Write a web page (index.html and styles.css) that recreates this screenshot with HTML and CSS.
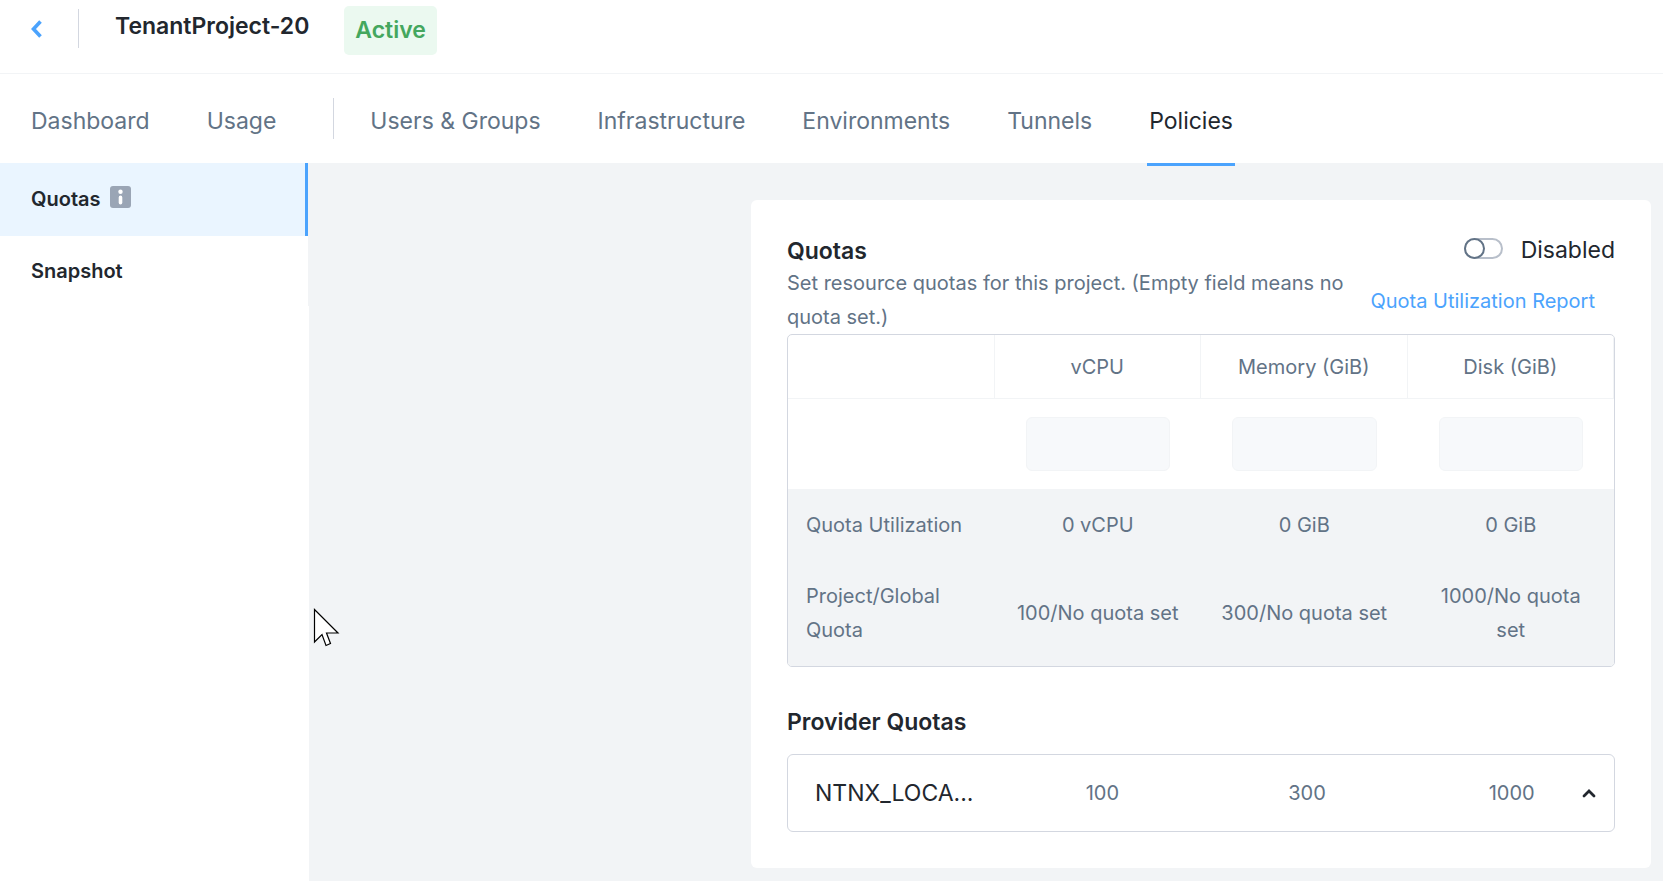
FILE: index.html
```html
<!DOCTYPE html>
<html lang="en">
<head>
<meta charset="utf-8">
<title>TenantProject-20 - Policies</title>
<link rel="stylesheet" href="styles.css">
</head>
<body>
<header class="topbar">
  <button class="back" type="button" aria-label="Back">
    <svg width="12" height="20" viewBox="0 0 12 20"><path d="M9.5 2.500 2.500 10l7 7.500" fill="none" stroke="currentColor" stroke-width="3.600" stroke-linecap="butt"/></svg>
  </button>
  <h1 class="project-name">TenantProject-20</h1>
  <span class="badge">Active</span>
</header>
<nav class="tabs" aria-label="Project">
  <a class="tab" href="#dashboard">Dashboard</a>
  <a class="tab" href="#usage">Usage</a>
  <span class="tab-divider"></span>
  <a class="tab" href="#users">Users &amp; Groups</a>
  <a class="tab" href="#infrastructure">Infrastructure</a>
  <a class="tab" href="#environments">Environments</a>
  <a class="tab" href="#tunnels">Tunnels</a>
  <a class="tab tab-active" href="#policies" aria-current="page">Policies</a>
</nav>
<div class="body">
  <aside class="sidebar">
    <a class="side-item side-active" href="#quotas">Quotas
      <svg class="info" width="21" height="22" viewBox="0 0 21 22"><rect width="21" height="22" rx="3" fill="#9aa5b5"/><circle cx="10.500" cy="5.800" r="2.200" fill="#fff"/><rect x="8.700" y="9.600" width="3.600" height="9" rx="1.800" fill="#fff"/></svg>
    </a>
    <a class="side-item" href="#snapshot">Snapshot</a>
  </aside>
  <main class="content">
    <section class="card">
      <div class="card-head">
        <div class="intro">
          <h2 class="heading">Quotas</h2>
          <p class="description">Set resource quotas for this project. (Empty field means no quota set.)</p>
        </div>
        <div class="actions">
          <label class="switch"><input class="toggle" type="checkbox" role="switch">Disabled</label>
          <a class="report" href="#report">Quota Utilization Report</a>
        </div>
      </div>
      <div class="table-box">
        <table class="quota-table">
          <thead>
            <tr><th></th><th scope="col">vCPU</th><th scope="col">Memory (GiB)</th><th scope="col">Disk (GiB)</th></tr>
          </thead>
          <tbody>
            <tr class="input-row">
              <td></td>
              <td><input class="field" type="text" aria-label="vCPU" disabled></td>
              <td><input class="field" type="text" aria-label="Memory (GiB)" disabled></td>
              <td><input class="field" type="text" aria-label="Disk (GiB)" disabled></td>
            </tr>
            <tr class="summary"><th scope="row">Quota Utilization</th><td>0 vCPU</td><td>0 GiB</td><td>0 GiB</td></tr>
            <tr class="summary"><th scope="row">Project/Global Quota</th><td>100/No quota set</td><td>300/No quota set</td><td>1000/No quota set</td></tr>
          </tbody>
        </table>
      </div>
      <h2 class="heading provider-heading">Provider Quotas</h2>
      <div class="provider">
        <span class="provider-name">NTNX_LOCA...</span>
        <span class="amount">100</span>
        <span class="amount">300</span>
        <span class="amount amount-last">1000</span>
        <button class="expand" type="button" aria-label="Toggle details">
          <svg width="14" height="10" viewBox="0 0 14 10"><path d="M2 8 7 3l5 5" fill="none" stroke="currentColor" stroke-width="2.800" stroke-linecap="round"/></svg>
        </button>
      </div>
    </section>
  </main>
</div>
<svg class="pointer" width="27" height="39" viewBox="0 0 27 39" aria-hidden="true"><path d="M1.500 1.500v32.500l7.500-7.500L13 37.500l4.500-2L13.500 25h11.500z" fill="#fff" stroke="#000" stroke-width="1.200"/></svg>
</body>
</html>
```
FILE: styles.css
```css
*,
*::before,
*::after {
  box-sizing: border-box;
}

body {
  margin: 0;
  min-height: 100vh;
  display: flex;
  flex-direction: column;
  background: #fff;
  color: #22272e;
  font-family: Inter, "Liberation Sans", sans-serif;
  font-size: 20px;
  line-height: 34px;
}

h1, h2, p {
  margin: 0;
}

a {
  color: inherit;
  text-decoration: none;
}

button {
  border: 0;
  padding: 0;
  background: none;
  color: inherit;
}

svg {
  display: block;
}

.topbar {
  display: flex;
  align-items: flex-start;
  height: 74px;
  border-bottom: 1px solid #f2f4f6;
}

.back {
  width: 79px;
  height: 39px;
  margin-top: 9px;
  padding-left: 31px;
  border-right: 1px solid #d3d7e0;
  color: #4ba3fd;
}

.project-name {
  padding: 9px 35px 0 36px;
  font-size: 23px;
  font-weight: 600;
}

.badge {
  margin-top: 6px;
  padding: 7px 11px 8px;
  border-radius: 5px;
  background: #ebf9f0;
  color: #44a75e;
  font-size: 23px;
  font-weight: 600;
}

.tabs {
  display: flex;
  align-items: center;
  gap: 57px;
  height: 89px;
  padding: 0 31px;
  color: #627386;
  font-size: 23px;
}

.tab {
  position: relative;
  height: 89px;
  padding-top: 30px;
  white-space: nowrap;
}

.tab-active {
  color: #22272e;
}

.tab-active::after {
  content: "";
  position: absolute;
  left: -2px;
  right: -2px;
  bottom: -3px;
  height: 3px;
  background: #4ba3fd;
}

.tab-divider {
  width: 1px;
  height: 41px;
  margin-right: -21px;
  background: #d3d7e0;
}

.body {
  flex: 1;
  display: flex;
  background: #f2f4f6;
}

.sidebar {
  flex: none;
  width: 309px;
  background: #fff;
}

.side-item {
  display: flex;
  align-items: center;
  gap: 9px;
  height: 70px;
  margin-right: 1px;
  padding: 0 31px;
  box-shadow: 1px 0 #f2f4f6;
  font-weight: 600;
}

.side-active {
  height: 73px;
  padding-bottom: 2px;
  border-right: 3px solid #4ba3fd;
  background: #eaf5ff;
}

.info {
  margin-bottom: 4px;
}

.content {
  flex: 1;
  display: flex;
  justify-content: flex-end;
  align-items: flex-start;
  padding: 37px 12px 13px;
}

.card {
  width: 100%;
  max-width: 900px;
  padding: 36px;
  border-radius: 6px;
  background: #fff;
}

.card-head {
  display: flex;
  justify-content: space-between;
  gap: 20px;
}

.intro {
  flex: 1;
}

.heading {
  font-size: 23px;
  font-weight: 600;
  line-height: 30px;
}

.description {
  color: #627386;
}

.actions {
  display: flex;
  flex-direction: column;
  gap: 20px;
}

.switch {
  display: flex;
  align-items: center;
  justify-content: flex-end;
  gap: 18px;
  line-height: 28px;
  font-size: 23px;
}

.toggle {
  appearance: none;
  width: 39px;
  height: 21px;
  margin: 0 0 3px;
  border: 2px solid #b8bfca;
  border-radius: 11px;
}

.toggle::before {
  content: "";
  display: block;
  width: 21px;
  height: 21px;
  margin: -2px;
  border: 2px solid #627386;
  border-radius: 50%;
  background: #fff;
}

.report {
  padding-right: 20px;
  color: #4ba3fd;
  white-space: nowrap;
}

.table-box {
  overflow: hidden;
  border: 1px solid #d3d7e0;
  border-radius: 5px;
}

.quota-table {
  width: 100%;
  table-layout: fixed;
  border-collapse: separate;
  border-spacing: 0;
  color: #627386;
  text-align: center;
}

.quota-table th {
  font-weight: 400;
}

.quota-table thead th {
  padding: 15px 0 14px;
  border-right: 1px solid #f2f4f6;
  border-bottom: 1px solid #f2f4f6;
}

.input-row td {
  padding: 18px 31px;
}

.field {
  display: block;
  width: 100%;
  height: 54px;
  border: 1px solid #f2f4f6;
  border-radius: 6px;
  background: #f7f9fb;
}

.quota-table .summary th,
.quota-table .summary td {
  padding: 19px 18px 18px;
  background: #f2f4f6;
}

.quota-table .summary:last-child th,
.quota-table .summary:last-child td {
  padding-bottom: 19px;
}

.summary th {
  text-align: left;
}

.provider-heading {
  margin: 40px 0 17px;
}

.provider {
  display: grid;
  grid-template-columns: 212px 1fr 1fr 1fr;
  align-items: center;
  height: 78px;
  border: 1px solid #d3d7e0;
  border-radius: 6px;
}

.provider-name {
  padding-left: 27px;
  font-size: 23px;
}

.amount {
  color: #627386;
  text-align: center;
}

.amount-last,
.expand {
  grid-row: 1;
  grid-column: 4;
}

.expand {
  justify-self: end;
  margin-right: 18px;
}

.pointer {
  position: absolute;
  left: 313px;
  top: 608px;
}
```
